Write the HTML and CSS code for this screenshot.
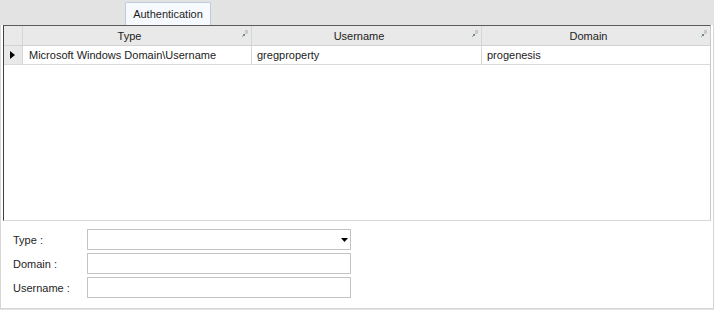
FILE: index.html
```html
<!DOCTYPE html>
<html lang="en">

<head>
  <meta charset="UTF-8">
  <title>Authentication</title>
  <link rel="stylesheet" href="styles.css">
</head>

<body>
  <div class="tab-strip">
    <div class="tab">Authentication</div>
  </div>

  <div class="tab-page">
    <div class="grid">
      <div class="grid-row header-row">
        <div class="cell row-head"></div>
        <div class="cell col-type head-cell">
          <span class="head-text">Type</span>
          <svg class="pin" width="6" height="7" viewBox="0 0 6 7">
            <path d="M3 0h3v3l-1 1h-2z" fill="#c9c9c9" />
            <path d="M1 4h2v2h-2z" fill="#6f8a8a" />
            <path d="M0 6h1v1h-1z" fill="#9aa7a7" />
          </svg>
        </div>
        <div class="cell col-user head-cell">
          <span class="head-text">Username</span>
          <svg class="pin" width="6" height="7" viewBox="0 0 6 7">
            <path d="M3 0h3v3l-1 1h-2z" fill="#c9c9c9" />
            <path d="M1 4h2v2h-2z" fill="#6f8a8a" />
            <path d="M0 6h1v1h-1z" fill="#9aa7a7" />
          </svg>
        </div>
        <div class="cell col-domain head-cell">
          <span class="head-text">Domain</span>
          <svg class="pin" width="6" height="7" viewBox="0 0 6 7">
            <path d="M3 0h3v3l-1 1h-2z" fill="#c9c9c9" />
            <path d="M1 4h2v2h-2z" fill="#6f8a8a" />
            <path d="M0 6h1v1h-1z" fill="#9aa7a7" />
          </svg>
        </div>
      </div>

      <div class="grid-row data-row">
        <div class="cell row-head">
          <svg width="5" height="8" viewBox="0 0 5 8">
            <path d="M0 0l5 4-5 4z" fill="#000" />
          </svg>
        </div>
        <div class="cell col-type">Microsoft Windows Domain\Username</div>
        <div class="cell col-user">gregproperty</div>
        <div class="cell col-domain">progenesis</div>
      </div>
    </div>

    <div class="form">
      <label>Type :</label>
      <div class="field combo">
        <span></span>
        <svg width="7" height="4" viewBox="0 0 7 4">
          <path d="M0 0h7l-3.5 4z" fill="#000" />
        </svg>
      </div>
      <label>Domain :</label>
      <input class="field" type="text">
      <label>Username :</label>
      <input class="field" type="text">
    </div>
  </div>
</body>

</html>
```

FILE: styles.css
```css
* {
  box-sizing: border-box;
}

body {
  margin: 0;
  width: 714px;
  height: 310px;
  background: #e3e3e3;
  font-family: "Liberation Sans", Arial, sans-serif;
  font-size: 11px;
  color: #1b1b1b;
}

.tab-strip {
  height: 25px;
  padding: 2px 0 0 125px;
}

.tab {
  width: 86px;
  height: 23px;
  background: #f6f9fd;
  border: 1px solid #bfcddb;
  border-bottom: none;
  border-radius: 2px 2px 0 0;
  display: flex;
  align-items: center;
  justify-content: center;
  color: #1e1e1e;
}

.tab-page {
  height: 284px;
  background: #fff;
  border: 1px solid #d6d6d6;
  border-top: none;
  padding: 0 2px;
}

.grid {
  height: 196px;
  border-top: 1px solid #5a5a5a;
  border-left: 1px solid #3f3f3f;
  border-right: 1px solid #c9c9c9;
  border-bottom: 1px solid #d8d8d8;
  background: #fff;
}

.grid-row {
  display: flex;
}

.header-row {
  height: 20px;
  background: #e9e9e9;
  border-bottom: 1px solid #d2d2d2;
}

.data-row {
  height: 19px;
  border-bottom: 1px solid #dadada;
}

.cell {
  height: 100%;
  display: flex;
  align-items: center;
  border-right: 1px solid #d6d6d6;
  white-space: nowrap;
  overflow: hidden;
}

.row-head {
  width: 19px;
  background: #e9e9e9;
  padding-left: 6px;
}

.col-type {
  width: 229px;
  padding-left: 6px;
}

.col-user {
  width: 230px;
  padding-left: 5px;
}

.col-domain {
  width: 228px;
  padding-left: 5px;
  border-right: none;
}

.head-cell {
  padding: 0 3px 0 0;
  color: #222;
}

.head-text {
  flex: 1;
  text-align: center;
}

.pin {
  margin: -5px 0 0 6px;
}

.form {
  display: grid;
  grid-template-columns: 74px 264px;
  row-gap: 3px;
  padding: 8px 0 0 10px;
  align-items: center;
}

.form label {
  color: #1e1e1e;
}

.field {
  height: 21px;
  border: 1px solid #c3c3c3;
  background: #fff;
  margin: 0;
  font: inherit;
}

.combo {
  display: flex;
  align-items: center;
  justify-content: flex-end;
  padding-right: 2px;
}

.combo svg {
  margin-top: 1px;
}
```
